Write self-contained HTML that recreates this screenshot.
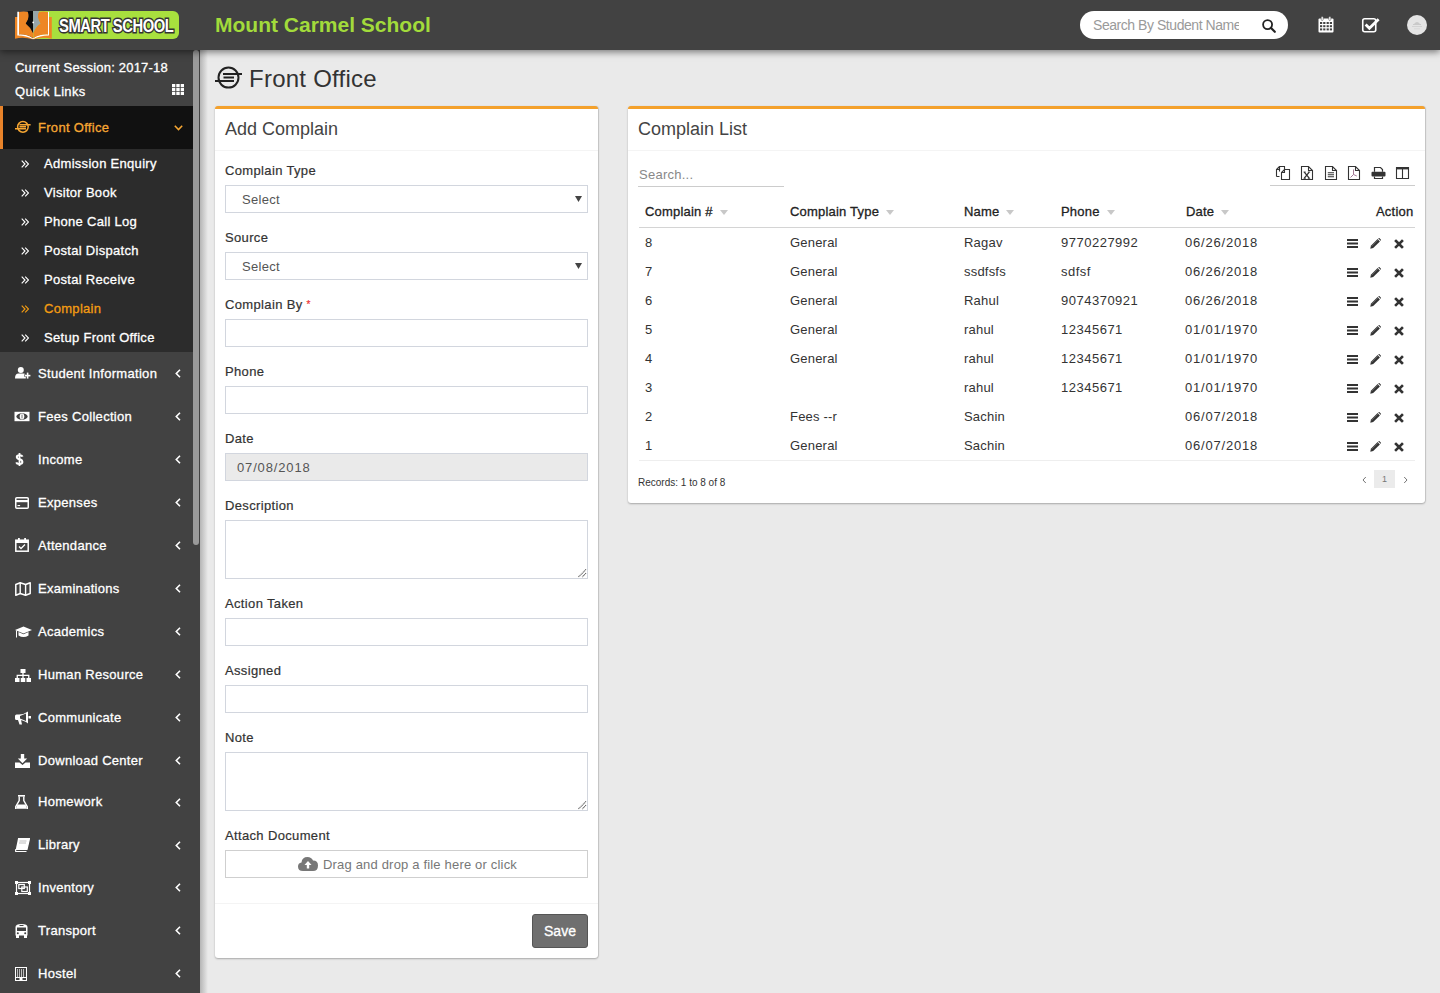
<!DOCTYPE html>
<html><head><meta charset="utf-8">
<style>
*{box-sizing:border-box;margin:0;padding:0}
html,body{width:1440px;height:993px;overflow:hidden;background:#eaeaea;font-family:"Liberation Sans",sans-serif;color:#333}
.abs{position:absolute}
.logo-t{font-size:18.5px;line-height:20px;font-weight:bold;color:#fff;letter-spacing:-0.6px;-webkit-text-stroke:3px #333;paint-order:stroke fill;transform:scaleX(.8);transform-origin:0 0;white-space:nowrap}
#hdr{position:absolute;left:0;top:0;width:1440px;height:50px;background:#424242;box-shadow:0 2px 7px rgba(0,0,0,.5);z-index:5}
#side{position:absolute;left:0;top:50px;width:200px;height:943px;background:#424242;z-index:3;overflow:hidden}
#shadowL{position:absolute;left:200px;top:50px;width:8px;height:943px;background:linear-gradient(to right,#b5b5b5,#eaeaea);z-index:2}
#thumb{position:absolute;left:193px;top:50px;width:6px;height:495px;background:#9a9a9a;border-radius:3px;z-index:4}
.m1{position:absolute;left:0;width:193px;height:43px;color:#fff;font-size:13px}
.m1 .t{position:absolute;left:38px;top:14px}
.m1 .ch{position:absolute;left:175px;top:15px}
.sub{position:absolute;left:0;top:99px;width:193px;height:203px;background:#2c2c2c}
.act{position:absolute;left:0;top:56px;width:193px;height:43px;background:#111;border-left:3px solid #e8832a}
.st{position:absolute;font-size:13px;line-height:15px;color:#fff;white-space:nowrap;letter-spacing:0.3px;-webkit-text-stroke:0.3px currentColor}
.ic{position:absolute;line-height:0}
.m2{position:absolute;left:0;width:193px;height:29px;color:#fff;font-size:13px}
.m2 .t{position:absolute;left:44px;top:7px}
.m2 .ic{position:absolute;left:21px;top:9px}
.box{position:absolute;background:#fff;border-top:3px solid #f4a12c;border-radius:3px;box-shadow:0 1px 2px rgba(0,0,0,.28),1px 0 1px rgba(0,0,0,.1)}
.lbl{position:absolute;left:10px;font-size:13px;color:#333}
.lb{position:absolute;font-size:13px;line-height:15px;color:#333;white-space:nowrap;-webkit-text-stroke:0.2px currentColor;margin-top:1px;letter-spacing:0.35px}
.th{position:absolute;font-size:13px;line-height:15px;color:#222;white-space:nowrap;-webkit-text-stroke:0.3px currentColor;letter-spacing:0.2px}
.td{position:absolute;font-size:13px;line-height:15px;color:#333;white-space:nowrap;letter-spacing:0.2px}
.inp{position:absolute;left:10px;width:363px;height:28px;border:1px solid #d2d6de;background:#fff}
</style></head><body>
<div id="hdr">
<div class="abs" style="left:33px;top:11px;width:146px;height:28px;background:#a8e03e;border-radius:0 6px 6px 0"></div>
<svg class="abs" style="left:12px;top:8px" width="44" height="34" viewBox="12 8 44 34">
<path d="M15 17 H19 V34.5 Q27 34 33 38.5 Q40 34 49 34.5 V17 H51.8 V38.8 Q43 36.5 34 39.3 H32.5 Q23 36.5 15 38.8Z" fill="#ee8624"/>
<path d="M17.3 11.8 H19 V34.4 Q27 34 33 38.4 Q39 34 48 34.4 V11.8 H49 V35.4 Q40 35.3 33.6 39 H32.6 Q26 35.3 17.3 35.4Z" fill="#fff"/>
<path d="M19 12 Q24 11.2 27.8 12 Q30.5 17 25.8 23.6 Q30 27 33 33 V38 Q27 34 19 34.3Z" fill="#ee8624"/>
<path d="M48 12 Q43 11.2 38.6 12 Q36 17 40.4 23.6 Q35.5 27 33.4 33 V38 Q40 34 48 34.3Z" fill="#ee8624"/>
<path d="M27.6 11 H33.1 V33 Q30.5 27 25.8 23.6 Q30.5 17 27.6 11Z" fill="#0b0b0b"/>
<path d="M33.1 11 H39.3 Q36 17 40.4 23.6 Q35.5 27 33.1 33Z" fill="#97a5aa"/>
<circle cx="33.2" cy="22.4" r=".9" fill="#fff"/>
</svg>
<div class="abs logo-t" style="left:59px;top:16px">SMART SCHOOL</div>
<div class="abs" style="left:215px;top:13px;font-size:21px;line-height:24px;font-weight:bold;color:#a2db3b;letter-spacing:0px;white-space:nowrap">Mount Carmel School</div>
<div class="abs" style="left:1080px;top:11px;width:208px;height:28px;background:#fff;border-radius:14px"></div>
<div class="abs" style="left:1093px;top:17px;width:146px;overflow:hidden;font-size:14px;line-height:16px;color:#9a9a9a;white-space:nowrap;letter-spacing:-0.45px">Search By Student Name</div>
<svg class="abs" style="left:1262px;top:19px" width="14" height="14" viewBox="0 0 14 14"><circle cx="5.6" cy="5.6" r="4.5" fill="none" stroke="#222" stroke-width="1.8"/><path d="M8.8 8.8 L12.8 12.8" stroke="#222" stroke-width="2.2" stroke-linecap="round"/></svg>
<svg class="abs" style="left:1318px;top:16px" width="16" height="17" viewBox="0 0 16 17"><rect x="0.5" y="2.5" width="15" height="14" rx="1" fill="#fff"/><rect x="3.2" y="0.5" width="2" height="4" rx="1" fill="#fff" stroke="#424242" stroke-width=".5"/><rect x="10.8" y="0.5" width="2" height="4" rx="1" fill="#fff" stroke="#424242" stroke-width=".5"/><g fill="#424242"><rect x="2" y="6" width="2.2" height="2"/><rect x="5.2" y="6" width="2.2" height="2"/><rect x="8.6" y="6" width="2.2" height="2"/><rect x="11.8" y="6" width="2.2" height="2"/><rect x="2" y="9.2" width="2.2" height="2"/><rect x="5.2" y="9.2" width="2.2" height="2"/><rect x="8.6" y="9.2" width="2.2" height="2"/><rect x="11.8" y="9.2" width="2.2" height="2"/><rect x="2" y="12.4" width="2.2" height="2"/><rect x="5.2" y="12.4" width="2.2" height="2"/><rect x="8.6" y="12.4" width="2.2" height="2"/><rect x="11.8" y="12.4" width="2.2" height="2"/></g></svg>
<svg class="abs" style="left:1361px;top:17px" width="20" height="17" viewBox="0 0 20 17"><rect x="1.75" y="1.75" width="13" height="13" rx="2" fill="none" stroke="#fff" stroke-width="1.6"/><path d="M4.6 7.4 L8.4 11.2 L17.6 2.2" fill="none" stroke="#fff" stroke-width="2.8"/></svg>
<div class="abs" style="left:1407px;top:15px;width:20px;height:20px;border-radius:50%;background:#e4e4e4"></div>
<svg class="abs" style="left:1410px;top:19px" width="14" height="12" viewBox="0 0 14 12"><path d="M4 5 Q7 1 10 5Z" fill="#c9c9c9"/><rect x="3" y="5" width="8" height="1" fill="#c9c9c9"/><rect x="2" y="7" width="10" height="1" fill="#d2d2d2"/><rect x="4" y="9.5" width="6" height=".7" fill="#d2d2d2"/></svg>
</div>
<div id="side">
<span class="st" style="left:15px;top:10px;letter-spacing:0.2px">Current Session: 2017-18</span>
<span class="st" style="left:15px;top:34px">Quick Links</span>
<span class="ic" style="left:172px;top:34px"><svg width="12" height="11" viewBox="0 0 12 11"><path d="M0 0h3.3v3.2H0zM4.3 0h3.4v3.2H4.3zM8.7 0H12v3.2H8.7zM0 3.9h3.3v3.2H0zM4.3 3.9h3.4v3.2H4.3zM8.7 3.9H12v3.2H8.7zM0 7.8h3.3V11H0zM4.3 7.8h3.4V11H4.3zM8.7 7.8H12V11H8.7z" fill="#fff"/></svg></span>
<div class="act"></div>
<span class="st" style="left:38px;top:70px;color:#f7a733">Front Office</span>
<span class="ic" style="left:15px;top:70px"><svg width="16" height="14" viewBox="0 0 16 14"><circle cx="7.9" cy="6.85" r="5.3" fill="none" stroke="#f7a733" stroke-width="1.5"/><path d="M0 8.8H11M4.5 4.7H15.6M4.5 6.75H11" stroke="#f7a733" stroke-width="1.4"/></svg></span>
<span class="ic" style="left:174px;top:75px"><svg width="9" height="6" viewBox="0 0 9 6"><path d="M0.8 0.8 L4.5 4.6 L8.2 0.8" fill="none" stroke="#f7a733" stroke-width="1.5"/></svg></span>
<div class="sub"></div>
<span class="st" style="left:44px;top:106px;color:#fff">Admission Enquiry</span>
<span class="ic" style="left:21px;top:110px"><svg width="8" height="8" viewBox="0 0 8 8"><path d="M0.7 0.6 L4 4 L0.7 7.4 M4.2 0.6 L7.5 4 L4.2 7.4" fill="none" stroke-width="1.15" stroke="#fff"/></svg></span>
<span class="st" style="left:44px;top:135px;color:#fff">Visitor Book</span>
<span class="ic" style="left:21px;top:139px"><svg width="8" height="8" viewBox="0 0 8 8"><path d="M0.7 0.6 L4 4 L0.7 7.4 M4.2 0.6 L7.5 4 L4.2 7.4" fill="none" stroke-width="1.15" stroke="#fff"/></svg></span>
<span class="st" style="left:44px;top:164px;color:#fff">Phone Call Log</span>
<span class="ic" style="left:21px;top:168px"><svg width="8" height="8" viewBox="0 0 8 8"><path d="M0.7 0.6 L4 4 L0.7 7.4 M4.2 0.6 L7.5 4 L4.2 7.4" fill="none" stroke-width="1.15" stroke="#fff"/></svg></span>
<span class="st" style="left:44px;top:193px;color:#fff">Postal Dispatch</span>
<span class="ic" style="left:21px;top:197px"><svg width="8" height="8" viewBox="0 0 8 8"><path d="M0.7 0.6 L4 4 L0.7 7.4 M4.2 0.6 L7.5 4 L4.2 7.4" fill="none" stroke-width="1.15" stroke="#fff"/></svg></span>
<span class="st" style="left:44px;top:222px;color:#fff">Postal Receive</span>
<span class="ic" style="left:21px;top:226px"><svg width="8" height="8" viewBox="0 0 8 8"><path d="M0.7 0.6 L4 4 L0.7 7.4 M4.2 0.6 L7.5 4 L4.2 7.4" fill="none" stroke-width="1.15" stroke="#fff"/></svg></span>
<span class="st" style="left:44px;top:251px;color:#f39c12">Complain</span>
<span class="ic" style="left:21px;top:255px"><svg width="8" height="8" viewBox="0 0 8 8"><path d="M0.7 0.6 L4 4 L0.7 7.4 M4.2 0.6 L7.5 4 L4.2 7.4" fill="none" stroke-width="1.15" stroke="#f39c12"/></svg></span>
<span class="st" style="left:44px;top:280px;color:#fff">Setup Front Office</span>
<span class="ic" style="left:21px;top:284px"><svg width="8" height="8" viewBox="0 0 8 8"><path d="M0.7 0.6 L4 4 L0.7 7.4 M4.2 0.6 L7.5 4 L4.2 7.4" fill="none" stroke-width="1.15" stroke="#fff"/></svg></span>
<span class="st" style="left:38px;top:316px">Student Information</span>
<span class="ic" style="left:15px;top:317px"><svg width="16" height="12" viewBox="0 0 16 12"><circle cx="5.8" cy="3" r="3" fill="#fff"/><path d="M0 11.6 Q0 6.6 3.5 6.6 L8.5 6.6 Q10 6.6 10.8 7.6 L10.8 11.6Z" fill="#fff"/><path d="M9.2 7.3 H14.6 V9.7 H9.2Z" fill="#424242"/><rect x="9.8" y="7.8" width="5.6" height="1.6" fill="#fff"/><rect x="11.8" y="5.6" width="1.6" height="6" fill="#fff"/></svg></span>
<span class="ic" style="left:175px;top:319px"><svg width="6" height="9" viewBox="0 0 6 9"><path d="M5 0.8 L1.3 4.5 L5 8.2" fill="none" stroke="#fff" stroke-width="1.6"/></svg></span>
<span class="st" style="left:38px;top:359px">Fees Collection</span>
<span class="ic" style="left:14px;top:361px"><svg width="16" height="11" viewBox="0 0 16 11"><rect x="0.5" y="0.8" width="15" height="9.4" fill="#fff"/><ellipse cx="8" cy="5.5" rx="5.6" ry="3.3" fill="#424242"/><ellipse cx="8" cy="5.5" rx="2.3" ry="3" fill="#fff"/><rect x="7.5" y="3.6" width="1" height="3.8" fill="#777"/></svg></span>
<span class="ic" style="left:175px;top:362px"><svg width="6" height="9" viewBox="0 0 6 9"><path d="M5 0.8 L1.3 4.5 L5 8.2" fill="none" stroke="#fff" stroke-width="1.6"/></svg></span>
<span class="st" style="left:38px;top:402px">Income</span>
<span class="ic" style="left:15px;top:403px"><svg width="9" height="13" viewBox="0 0 9 13"><path d="M7.6 3.6 Q7 2.2 4.5 2.2 Q1.8 2.2 1.8 4 Q1.8 5.6 4.5 6.3 Q7.4 7 7.4 9 Q7.4 10.9 4.5 10.9 Q1.8 10.9 1.2 9.3" fill="none" stroke="#fff" stroke-width="2"/><rect x="3.6" y="0" width="1.8" height="13" fill="#fff"/></svg></span>
<span class="ic" style="left:175px;top:405px"><svg width="6" height="9" viewBox="0 0 6 9"><path d="M5 0.8 L1.3 4.5 L5 8.2" fill="none" stroke="#fff" stroke-width="1.6"/></svg></span>
<span class="st" style="left:38px;top:445px">Expenses</span>
<span class="ic" style="left:15px;top:447px"><svg width="14" height="12" viewBox="0 0 14 12"><rect x="0.75" y="0.75" width="12.5" height="10.5" rx="1" fill="none" stroke="#fff" stroke-width="1.5"/><rect x="1" y="3" width="12" height="2.2" fill="#fff"/><rect x="2.5" y="8" width="2.6" height="1.1" fill="#fff"/></svg></span>
<span class="ic" style="left:175px;top:448px"><svg width="6" height="9" viewBox="0 0 6 9"><path d="M5 0.8 L1.3 4.5 L5 8.2" fill="none" stroke="#fff" stroke-width="1.6"/></svg></span>
<span class="st" style="left:38px;top:488px">Attendance</span>
<span class="ic" style="left:15px;top:488px"><svg width="14" height="14" viewBox="0 0 14 14"><rect x="0.8" y="2.2" width="12.4" height="11" fill="none" stroke="#fff" stroke-width="1.5"/><rect x="0.8" y="2.2" width="12.4" height="2.8" fill="#fff"/><rect x="3" y="0" width="1.8" height="3.5" fill="#fff"/><rect x="9.2" y="0" width="1.8" height="3.5" fill="#fff"/><path d="M4 8.5 L6 10.5 L10 6.5" fill="none" stroke="#fff" stroke-width="1.3"/></svg></span>
<span class="ic" style="left:175px;top:491px"><svg width="6" height="9" viewBox="0 0 6 9"><path d="M5 0.8 L1.3 4.5 L5 8.2" fill="none" stroke="#fff" stroke-width="1.6"/></svg></span>
<span class="st" style="left:38px;top:531px">Examinations</span>
<span class="ic" style="left:15px;top:532px"><svg width="16" height="14" viewBox="0 0 16 14"><path d="M0.8 2.5 L5.2 0.8 L10.6 2.5 L15.2 0.8 L15.2 11.5 L10.6 13.2 L5.2 11.5 L0.8 13.2Z" fill="none" stroke="#fff" stroke-width="1.5" stroke-linejoin="round"/><path d="M5.2 0.8 V11.5 M10.6 2.5 V13.2" stroke="#fff" stroke-width="1.4"/></svg></span>
<span class="ic" style="left:175px;top:534px"><svg width="6" height="9" viewBox="0 0 6 9"><path d="M5 0.8 L1.3 4.5 L5 8.2" fill="none" stroke="#fff" stroke-width="1.6"/></svg></span>
<span class="st" style="left:38px;top:574px">Academics</span>
<span class="ic" style="left:15px;top:576px"><svg width="17" height="13" viewBox="0 0 17 13"><path d="M0 4 L8.5 0.5 L17 4 L8.5 7.5Z" fill="#fff"/><path d="M3.5 6 V9.5 Q8.5 12.5 13.5 9.5 V6 L8.5 8.2Z" fill="#fff"/><rect x="1" y="4.5" width="1" height="7" fill="#fff"/></svg></span>
<span class="ic" style="left:175px;top:577px"><svg width="6" height="9" viewBox="0 0 6 9"><path d="M5 0.8 L1.3 4.5 L5 8.2" fill="none" stroke="#fff" stroke-width="1.6"/></svg></span>
<span class="st" style="left:38px;top:617px">Human Resource</span>
<span class="ic" style="left:15px;top:619px"><svg width="16" height="13" viewBox="0 0 16 13"><rect x="5.5" y="0" width="5" height="4" fill="#fff"/><rect x="0" y="9" width="4.5" height="4" fill="#fff"/><rect x="5.75" y="9" width="4.5" height="4" fill="#fff"/><rect x="11.5" y="9" width="4.5" height="4" fill="#fff"/><path d="M8 4 V9 M2.25 9 V6.3 H13.75 V9" fill="none" stroke="#fff" stroke-width="1.3"/></svg></span>
<span class="ic" style="left:175px;top:620px"><svg width="6" height="9" viewBox="0 0 6 9"><path d="M5 0.8 L1.3 4.5 L5 8.2" fill="none" stroke="#fff" stroke-width="1.6"/></svg></span>
<span class="st" style="left:38px;top:660px">Communicate</span>
<span class="ic" style="left:15px;top:661px"><svg width="16" height="14" viewBox="0 0 16 14"><path d="M13 0.5 L13 12.5 Q9 9 4 9 L1.5 9 Q0 9 0 7.5 L0 5 Q0 3.5 1.5 3.5 L4 3.5 Q9 3.5 13 0.5Z" fill="#fff"/><path d="M3 9 L4.5 13.5 L7 13.5 L6 9Z" fill="#fff"/><rect x="13.5" y="5" width="2.5" height="2.5" fill="#fff"/><path d="M5 5 L11 2.5 L11 10 L5 7.5Z" fill="#424242"/></svg></span>
<span class="ic" style="left:175px;top:663px"><svg width="6" height="9" viewBox="0 0 6 9"><path d="M5 0.8 L1.3 4.5 L5 8.2" fill="none" stroke="#fff" stroke-width="1.6"/></svg></span>
<span class="st" style="left:38px;top:703px">Download Center</span>
<span class="ic" style="left:15px;top:704px"><svg width="15" height="14" viewBox="0 0 15 14"><rect x="5.8" y="0" width="3.4" height="5" fill="#fff"/><path d="M2.8 4.5 H12.2 L7.5 9.3Z" fill="#fff"/><path d="M0 8.5 H4.5 L7.5 11 L10.5 8.5 H15 V14 H0Z" fill="#fff"/></svg></span>
<span class="ic" style="left:175px;top:706px"><svg width="6" height="9" viewBox="0 0 6 9"><path d="M5 0.8 L1.3 4.5 L5 8.2" fill="none" stroke="#fff" stroke-width="1.6"/></svg></span>
<span class="st" style="left:38px;top:744px">Homework</span>
<span class="ic" style="left:15px;top:745px"><svg width="13" height="14" viewBox="0 0 13 14"><rect x="3" y="0" width="7" height="1.6" fill="#fff"/><path d="M4.2 1.5 V5.5 L0.3 12.5 Q0 14 1.5 14 H11.5 Q13 14 12.7 12.5 L8.8 5.5 V1.5" fill="none" stroke="#fff" stroke-width="1.4"/><path d="M2.5 9.5 H10.5 L12 13 H1Z" fill="#fff"/></svg></span>
<span class="ic" style="left:175px;top:748px"><svg width="6" height="9" viewBox="0 0 6 9"><path d="M5 0.8 L1.3 4.5 L5 8.2" fill="none" stroke="#fff" stroke-width="1.6"/></svg></span>
<span class="st" style="left:38px;top:787px">Library</span>
<span class="ic" style="left:15px;top:788px"><svg width="15" height="14" viewBox="0 0 15 14"><path d="M3 0.5 H14.5 L12 11.5 H1.5 Q0 11.5 0.2 12.5 Q0.5 13.5 2 13.5 H11.5" fill="none" stroke="#fff" stroke-width="1.2"/><path d="M3 0.5 H14.5 L12 11.2 H0.8Z" fill="#fff"/><path d="M4.5 3 H11.5 M4 5 H11" stroke="#aaa" stroke-width=".8"/></svg></span>
<span class="ic" style="left:175px;top:791px"><svg width="6" height="9" viewBox="0 0 6 9"><path d="M5 0.8 L1.3 4.5 L5 8.2" fill="none" stroke="#fff" stroke-width="1.6"/></svg></span>
<span class="st" style="left:38px;top:830px">Inventory</span>
<span class="ic" style="left:15px;top:831px"><svg width="16" height="14" viewBox="0 0 16 14"><rect x="1.5" y="1.5" width="13" height="11" fill="none" stroke="#fff" stroke-width="1.2"/><rect x="0" y="0" width="3" height="3" fill="#fff"/><rect x="13" y="0" width="3" height="3" fill="#fff"/><rect x="0" y="11" width="3" height="3" fill="#fff"/><rect x="13" y="11" width="3" height="3" fill="#fff"/><rect x="3.8" y="3.5" width="5.5" height="4" fill="none" stroke="#fff" stroke-width="1.2"/><rect x="6.8" y="6" width="5.5" height="4.5" fill="none" stroke="#fff" stroke-width="1.2"/></svg></span>
<span class="ic" style="left:175px;top:833px"><svg width="6" height="9" viewBox="0 0 6 9"><path d="M5 0.8 L1.3 4.5 L5 8.2" fill="none" stroke="#fff" stroke-width="1.6"/></svg></span>
<span class="st" style="left:38px;top:873px">Transport</span>
<span class="ic" style="left:15px;top:874px"><svg width="13" height="14" viewBox="0 0 13 14"><path d="M0.5 3 Q0.5 0 6.5 0 Q12.5 0 12.5 3 V11.5 H0.5Z" fill="#fff"/><rect x="2" y="3.5" width="9" height="3.5" fill="#424242"/><rect x="1" y="11" width="3" height="3" fill="#fff"/><rect x="9" y="11" width="3" height="3" fill="#fff"/><rect x="4.5" y="1" width="4" height="1" fill="#424242"/><circle cx="2.8" cy="9.3" r="1" fill="#424242"/><circle cx="10.2" cy="9.3" r="1" fill="#424242"/></svg></span>
<span class="ic" style="left:175px;top:876px"><svg width="6" height="9" viewBox="0 0 6 9"><path d="M5 0.8 L1.3 4.5 L5 8.2" fill="none" stroke="#fff" stroke-width="1.6"/></svg></span>
<span class="st" style="left:38px;top:916px">Hostel</span>
<span class="ic" style="left:15px;top:917px"><svg width="12" height="14" viewBox="0 0 12 14"><rect x="0.5" y="0.5" width="11" height="13" fill="none" stroke="#fff" stroke-width="1"/><path d="M2.5 2V10M4.5 2V10M6.5 2V10M8.5 2V10" stroke="#bbb" stroke-width="1"/><path d="M1 10.5H11" stroke="#fff" stroke-width="1"/><rect x="4.5" y="11" width="3" height="3" fill="#fff"/></svg></span>
<span class="ic" style="left:175px;top:919px"><svg width="6" height="9" viewBox="0 0 6 9"><path d="M5 0.8 L1.3 4.5 L5 8.2" fill="none" stroke="#fff" stroke-width="1.6"/></svg></span>
</div>
<div id="thumb"></div>
<div id="shadowL"></div>
<div id="content">
<svg class="abs" style="left:214px;top:66px" width="29" height="24" viewBox="0 0 29 24"><circle cx="14.5" cy="11.6" r="10" fill="none" stroke="#222" stroke-width="2"/><path d="M1 15H20M9 7.9H28M9.5 11.6H20" stroke="#222" stroke-width="2"/></svg>
<div class="abs" style="left:249px;top:65px;font-size:24px;line-height:28px;color:#333;white-space:nowrap;letter-spacing:0.25px">Front Office</div>
<div class="box" style="left:215px;top:106px;width:383px;height:852px"></div>
<div class="abs" style="left:225px;top:119px;font-size:18px;line-height:21px;color:#444;white-space:nowrap">Add Complain</div>
<div class="abs" style="left:215px;top:150px;width:383px;height:1px;background:#f4f4f4"></div>
<div class="lb" style="left:225px;top:162px">Complain Type</div>
<div class="lb" style="left:225px;top:229px">Source</div>
<div class="lb" style="left:225px;top:296px">Complain By <span style="color:#e33;font-size:10px;position:relative;top:-1px">*</span></div>
<div class="lb" style="left:225px;top:363px">Phone</div>
<div class="lb" style="left:225px;top:430px">Date</div>
<div class="lb" style="left:225px;top:497px">Description</div>
<div class="lb" style="left:225px;top:595px">Action Taken</div>
<div class="lb" style="left:225px;top:662px">Assigned</div>
<div class="lb" style="left:225px;top:729px">Note</div>
<div class="lb" style="left:225px;top:827px">Attach Document</div>
<div class="abs" style="left:225px;top:185px;width:363px;height:28px;border:1px solid #d2d6de;background:#fff"></div>
<div class="abs" style="left:242px;top:192px;font-size:13px;line-height:15px;color:#555;letter-spacing:0.3px">Select</div>
<svg class="abs" style="left:575px;top:196px" width="7" height="6" viewBox="0 0 7 6"><path d="M0 0H7L3.5 6Z" fill="#444"/></svg>
<div class="abs" style="left:225px;top:252px;width:363px;height:28px;border:1px solid #d2d6de;background:#fff"></div>
<div class="abs" style="left:242px;top:259px;font-size:13px;line-height:15px;color:#555;letter-spacing:0.3px">Select</div>
<svg class="abs" style="left:575px;top:263px" width="7" height="6" viewBox="0 0 7 6"><path d="M0 0H7L3.5 6Z" fill="#444"/></svg>
<div class="abs" style="left:225px;top:319px;width:363px;height:28px;border:1px solid #d2d6de;background:#fff"></div>
<div class="abs" style="left:225px;top:386px;width:363px;height:28px;border:1px solid #d2d6de;background:#fff"></div>
<div class="abs" style="left:225px;top:453px;width:363px;height:28px;border:1px solid #d2d6de;background:#eaeaea"></div>
<div class="abs" style="left:237px;top:460px;font-size:13px;line-height:15px;color:#555;letter-spacing:0.85px">07/08/2018</div>
<div class="abs" style="left:225px;top:520px;width:363px;height:59px;border:1px solid #d2d6de;background:#fff"></div>
<svg class="abs" style="left:577px;top:569px" width="10" height="10" viewBox="0 0 10 10"><path d="M9 0.4L1.2 8.2M9 4.2L5.2 8" stroke="#555" stroke-width="1.1" stroke-dasharray="1 .6"/></svg>
<div class="abs" style="left:225px;top:618px;width:363px;height:28px;border:1px solid #d2d6de;background:#fff"></div>
<div class="abs" style="left:225px;top:685px;width:363px;height:28px;border:1px solid #d2d6de;background:#fff"></div>
<div class="abs" style="left:225px;top:752px;width:363px;height:59px;border:1px solid #d2d6de;background:#fff"></div>
<svg class="abs" style="left:577px;top:801px" width="10" height="10" viewBox="0 0 10 10"><path d="M9 0.4L1.2 8.2M9 4.2L5.2 8" stroke="#555" stroke-width="1.1" stroke-dasharray="1 .6"/></svg>
<div class="abs" style="left:225px;top:850px;width:363px;height:28px;border:1px solid #cfcfcf;background:#fff"></div>
<svg class="abs" style="left:298px;top:856px" width="20" height="15" viewBox="0 0 20 15"><path d="M5 15 Q0 15 0 10.5 Q0 7 3.5 6.5 Q4 1 9.5 1 Q13.5 1 15 4.5 Q20 4.5 20 9.5 Q20 15 15 15Z" fill="#777"/><path d="M10 5 L6.5 9 H8.8 V12.5 H11.2 V9 H13.5Z" fill="#fff"/></svg>
<div class="abs" style="left:323px;top:857px;font-size:13px;line-height:15px;color:#777;white-space:nowrap;letter-spacing:0.18px">Drag and drop a file here or click</div>
<div class="abs" style="left:215px;top:903px;width:383px;height:1px;background:#f4f4f4"></div>
<div class="abs" style="left:532px;top:914px;width:56px;height:34px;background:#6f6f6f;border:1px solid #555;border-radius:3px;color:#fff;font-size:14px;line-height:32px;text-align:center;-webkit-text-stroke:0.3px #fff">Save</div>
<div class="box" style="left:628px;top:106px;width:797px;height:397px"></div>
<div class="abs" style="left:638px;top:119px;font-size:18px;line-height:21px;color:#444;white-space:nowrap">Complain List</div>
<div class="abs" style="left:628px;top:150px;width:797px;height:1px;background:#f4f4f4"></div>
<div class="abs" style="left:639px;top:167px;font-size:13px;line-height:15px;color:#888;letter-spacing:0.25px">Search...</div>
<div class="abs" style="left:638px;top:186px;width:146px;height:1px;background:#ccc"></div>
<div class="abs" style="left:1270px;top:185px;width:145px;height:1px;background:#ccc"></div>
<div class="abs" style="left:639px;top:227px;width:776px;height:1px;background:#d4d4d4"></div>
<div class="abs" style="left:639px;top:460px;width:776px;height:1px;background:#eee"></div>
<div class="th" style="left:645px;top:204px">Complain #<svg style="margin-left:7px;vertical-align:1px" width="8" height="5" viewBox="0 0 8 5"><path d="M0 0H8L4 5Z" fill="#c8c8c8"/></svg></div>
<div class="th" style="left:790px;top:204px">Complain Type<svg style="margin-left:7px;vertical-align:1px" width="8" height="5" viewBox="0 0 8 5"><path d="M0 0H8L4 5Z" fill="#c8c8c8"/></svg></div>
<div class="th" style="left:964px;top:204px">Name<svg style="margin-left:7px;vertical-align:1px" width="8" height="5" viewBox="0 0 8 5"><path d="M0 0H8L4 5Z" fill="#c8c8c8"/></svg></div>
<div class="th" style="left:1061px;top:204px">Phone<svg style="margin-left:7px;vertical-align:1px" width="8" height="5" viewBox="0 0 8 5"><path d="M0 0H8L4 5Z" fill="#c8c8c8"/></svg></div>
<div class="th" style="left:1186px;top:204px">Date<svg style="margin-left:7px;vertical-align:1px" width="8" height="5" viewBox="0 0 8 5"><path d="M0 0H8L4 5Z" fill="#c8c8c8"/></svg></div>
<div class="th" style="left:1376px;top:204px">Action</div>
<div class="td" style="left:645px;top:235px">8</div>
<div class="td" style="left:790px;top:235px">General</div>
<div class="td" style="left:964px;top:235px">Ragav</div>
<div class="td" style="left:1061px;top:235px;letter-spacing:0.5px">9770227992</div>
<div class="td" style="left:1185px;top:235px;letter-spacing:0.8px">06/26/2018</div>
<svg class="abs" style="left:1347px;top:239px" width="11" height="9" viewBox="0 0 11 9"><path d="M0 1H11M0 4.5H11M0 8H11" stroke="#333" stroke-width="1.8"/></svg>
<svg class="abs" style="left:1370px;top:238px" width="11" height="11" viewBox="0 0 11 11"><path d="M0.3 10.7 L0.9 7.8 L7.6 1.1 L9.9 3.4 L3.2 10.1Z" fill="#333"/><path d="M8.3 0.4 L9 -0.3 L11.3 2 L10.6 2.7Z" fill="#333"/><path d="M1.6 8.4L8 2" stroke="#888" stroke-width=".5"/></svg>
<svg class="abs" style="left:1394px;top:239px" width="10" height="10" viewBox="0 0 10 10"><path d="M2 2L8 8M8 2L2 8" stroke="#333" stroke-width="2.6" stroke-linecap="square"/></svg>
<div class="td" style="left:645px;top:264px">7</div>
<div class="td" style="left:790px;top:264px">General</div>
<div class="td" style="left:964px;top:264px">ssdfsfs</div>
<div class="td" style="left:1061px;top:264px;letter-spacing:0.5px">sdfsf</div>
<div class="td" style="left:1185px;top:264px;letter-spacing:0.8px">06/26/2018</div>
<svg class="abs" style="left:1347px;top:268px" width="11" height="9" viewBox="0 0 11 9"><path d="M0 1H11M0 4.5H11M0 8H11" stroke="#333" stroke-width="1.8"/></svg>
<svg class="abs" style="left:1370px;top:267px" width="11" height="11" viewBox="0 0 11 11"><path d="M0.3 10.7 L0.9 7.8 L7.6 1.1 L9.9 3.4 L3.2 10.1Z" fill="#333"/><path d="M8.3 0.4 L9 -0.3 L11.3 2 L10.6 2.7Z" fill="#333"/><path d="M1.6 8.4L8 2" stroke="#888" stroke-width=".5"/></svg>
<svg class="abs" style="left:1394px;top:268px" width="10" height="10" viewBox="0 0 10 10"><path d="M2 2L8 8M8 2L2 8" stroke="#333" stroke-width="2.6" stroke-linecap="square"/></svg>
<div class="td" style="left:645px;top:293px">6</div>
<div class="td" style="left:790px;top:293px">General</div>
<div class="td" style="left:964px;top:293px">Rahul</div>
<div class="td" style="left:1061px;top:293px;letter-spacing:0.5px">9074370921</div>
<div class="td" style="left:1185px;top:293px;letter-spacing:0.8px">06/26/2018</div>
<svg class="abs" style="left:1347px;top:297px" width="11" height="9" viewBox="0 0 11 9"><path d="M0 1H11M0 4.5H11M0 8H11" stroke="#333" stroke-width="1.8"/></svg>
<svg class="abs" style="left:1370px;top:296px" width="11" height="11" viewBox="0 0 11 11"><path d="M0.3 10.7 L0.9 7.8 L7.6 1.1 L9.9 3.4 L3.2 10.1Z" fill="#333"/><path d="M8.3 0.4 L9 -0.3 L11.3 2 L10.6 2.7Z" fill="#333"/><path d="M1.6 8.4L8 2" stroke="#888" stroke-width=".5"/></svg>
<svg class="abs" style="left:1394px;top:297px" width="10" height="10" viewBox="0 0 10 10"><path d="M2 2L8 8M8 2L2 8" stroke="#333" stroke-width="2.6" stroke-linecap="square"/></svg>
<div class="td" style="left:645px;top:322px">5</div>
<div class="td" style="left:790px;top:322px">General</div>
<div class="td" style="left:964px;top:322px">rahul</div>
<div class="td" style="left:1061px;top:322px;letter-spacing:0.5px">12345671</div>
<div class="td" style="left:1185px;top:322px;letter-spacing:0.8px">01/01/1970</div>
<svg class="abs" style="left:1347px;top:326px" width="11" height="9" viewBox="0 0 11 9"><path d="M0 1H11M0 4.5H11M0 8H11" stroke="#333" stroke-width="1.8"/></svg>
<svg class="abs" style="left:1370px;top:325px" width="11" height="11" viewBox="0 0 11 11"><path d="M0.3 10.7 L0.9 7.8 L7.6 1.1 L9.9 3.4 L3.2 10.1Z" fill="#333"/><path d="M8.3 0.4 L9 -0.3 L11.3 2 L10.6 2.7Z" fill="#333"/><path d="M1.6 8.4L8 2" stroke="#888" stroke-width=".5"/></svg>
<svg class="abs" style="left:1394px;top:326px" width="10" height="10" viewBox="0 0 10 10"><path d="M2 2L8 8M8 2L2 8" stroke="#333" stroke-width="2.6" stroke-linecap="square"/></svg>
<div class="td" style="left:645px;top:351px">4</div>
<div class="td" style="left:790px;top:351px">General</div>
<div class="td" style="left:964px;top:351px">rahul</div>
<div class="td" style="left:1061px;top:351px;letter-spacing:0.5px">12345671</div>
<div class="td" style="left:1185px;top:351px;letter-spacing:0.8px">01/01/1970</div>
<svg class="abs" style="left:1347px;top:355px" width="11" height="9" viewBox="0 0 11 9"><path d="M0 1H11M0 4.5H11M0 8H11" stroke="#333" stroke-width="1.8"/></svg>
<svg class="abs" style="left:1370px;top:354px" width="11" height="11" viewBox="0 0 11 11"><path d="M0.3 10.7 L0.9 7.8 L7.6 1.1 L9.9 3.4 L3.2 10.1Z" fill="#333"/><path d="M8.3 0.4 L9 -0.3 L11.3 2 L10.6 2.7Z" fill="#333"/><path d="M1.6 8.4L8 2" stroke="#888" stroke-width=".5"/></svg>
<svg class="abs" style="left:1394px;top:355px" width="10" height="10" viewBox="0 0 10 10"><path d="M2 2L8 8M8 2L2 8" stroke="#333" stroke-width="2.6" stroke-linecap="square"/></svg>
<div class="td" style="left:645px;top:380px">3</div>
<div class="td" style="left:964px;top:380px">rahul</div>
<div class="td" style="left:1061px;top:380px;letter-spacing:0.5px">12345671</div>
<div class="td" style="left:1185px;top:380px;letter-spacing:0.8px">01/01/1970</div>
<svg class="abs" style="left:1347px;top:384px" width="11" height="9" viewBox="0 0 11 9"><path d="M0 1H11M0 4.5H11M0 8H11" stroke="#333" stroke-width="1.8"/></svg>
<svg class="abs" style="left:1370px;top:383px" width="11" height="11" viewBox="0 0 11 11"><path d="M0.3 10.7 L0.9 7.8 L7.6 1.1 L9.9 3.4 L3.2 10.1Z" fill="#333"/><path d="M8.3 0.4 L9 -0.3 L11.3 2 L10.6 2.7Z" fill="#333"/><path d="M1.6 8.4L8 2" stroke="#888" stroke-width=".5"/></svg>
<svg class="abs" style="left:1394px;top:384px" width="10" height="10" viewBox="0 0 10 10"><path d="M2 2L8 8M8 2L2 8" stroke="#333" stroke-width="2.6" stroke-linecap="square"/></svg>
<div class="td" style="left:645px;top:409px">2</div>
<div class="td" style="left:790px;top:409px">Fees --r</div>
<div class="td" style="left:964px;top:409px">Sachin</div>
<div class="td" style="left:1185px;top:409px;letter-spacing:0.8px">06/07/2018</div>
<svg class="abs" style="left:1347px;top:413px" width="11" height="9" viewBox="0 0 11 9"><path d="M0 1H11M0 4.5H11M0 8H11" stroke="#333" stroke-width="1.8"/></svg>
<svg class="abs" style="left:1370px;top:412px" width="11" height="11" viewBox="0 0 11 11"><path d="M0.3 10.7 L0.9 7.8 L7.6 1.1 L9.9 3.4 L3.2 10.1Z" fill="#333"/><path d="M8.3 0.4 L9 -0.3 L11.3 2 L10.6 2.7Z" fill="#333"/><path d="M1.6 8.4L8 2" stroke="#888" stroke-width=".5"/></svg>
<svg class="abs" style="left:1394px;top:413px" width="10" height="10" viewBox="0 0 10 10"><path d="M2 2L8 8M8 2L2 8" stroke="#333" stroke-width="2.6" stroke-linecap="square"/></svg>
<div class="td" style="left:645px;top:438px">1</div>
<div class="td" style="left:790px;top:438px">General</div>
<div class="td" style="left:964px;top:438px">Sachin</div>
<div class="td" style="left:1185px;top:438px;letter-spacing:0.8px">06/07/2018</div>
<svg class="abs" style="left:1347px;top:442px" width="11" height="9" viewBox="0 0 11 9"><path d="M0 1H11M0 4.5H11M0 8H11" stroke="#333" stroke-width="1.8"/></svg>
<svg class="abs" style="left:1370px;top:441px" width="11" height="11" viewBox="0 0 11 11"><path d="M0.3 10.7 L0.9 7.8 L7.6 1.1 L9.9 3.4 L3.2 10.1Z" fill="#333"/><path d="M8.3 0.4 L9 -0.3 L11.3 2 L10.6 2.7Z" fill="#333"/><path d="M1.6 8.4L8 2" stroke="#888" stroke-width=".5"/></svg>
<svg class="abs" style="left:1394px;top:442px" width="10" height="10" viewBox="0 0 10 10"><path d="M2 2L8 8M8 2L2 8" stroke="#333" stroke-width="2.6" stroke-linecap="square"/></svg>
<svg class="abs" style="left:1270px;top:160px" width="145" height="25" viewBox="0 0 145 25">
<g fill="none" stroke="#333" stroke-width="1.1">
<path d="M9.5 11.5V6.5H14.5V9.5 M6.5 16.5H9.5 M6.5 16.5V9.5L9.5 6.5"/>
<path d="M6.5 9.5H9.5V6.5"/>
<path d="M14.5 9.5H19.5V19.5H11.5V12.5L14.5 9.5V12.5H11.5"/>
<path d="M31.5 6.5H38.5L42.5 10.5V19.5H31.5Z M38.5 6.5V10.5H42.5"/>
<path d="M55.5 6.5H62.5L66.5 10.5V19.5H55.5Z M62.5 6.5V10.5H66.5"/>
<path d="M57.8 12.7H64M57.8 14.7H64M57.8 16.7H64"/>
<path d="M78.5 6.5H85.5L89.5 10.5V19.5H78.5Z M85.5 6.5V10.5H89.5"/>
<path d="M126.5 7.5H138.5V18.5H126.5Z M132.5 8V18.5"/>
</g>
<path d="M34.3 12.2L39.2 18.2M39.2 12.2L34.3 18.2" stroke="#333" stroke-width="1.3"/>
<path d="M33.5 12H35.8M37.8 12H40.2M33.5 18.4H35.8M37.8 18.4H40.2" stroke="#333" stroke-width=".8"/>
<path d="M83.5 9.5V14.5L80.5 17.5M83.5 14.5L86.8 16" fill="none" stroke="#9a6a8a" stroke-width=".9"/>
<path d="M104.5 11.8V7.5H110.5L112.5 9.5V11.8 M104.5 16.5V18.5H112.5V16.5" fill="none" stroke="#333" stroke-width="1.2"/>
<rect x="101.5" y="11.8" width="14" height="4.6" rx="1" fill="#333"/>
<rect x="126" y="7" width="13" height="2.4" fill="#333"/>
</svg>
<div class="abs" style="left:638px;top:477px;font-size:10px;line-height:12px;color:#333;white-space:nowrap">Records: 1 to 8 of 8</div>
<div class="abs" style="left:1374px;top:470px;width:21px;height:18px;background:#ebebeb;color:#777;font-size:9px;line-height:19px;text-align:center">1</div>
<svg class="abs" style="left:1362px;top:476px" width="5" height="8" viewBox="0 0 5 8"><path d="M3.8 1L1 4L3.8 7" fill="none" stroke="#666" stroke-width=".9"/></svg>
<svg class="abs" style="left:1403px;top:476px" width="5" height="8" viewBox="0 0 5 8"><path d="M1.2 1L4 4L1.2 7" fill="none" stroke="#666" stroke-width=".9"/></svg>
</div>
</body></html>
